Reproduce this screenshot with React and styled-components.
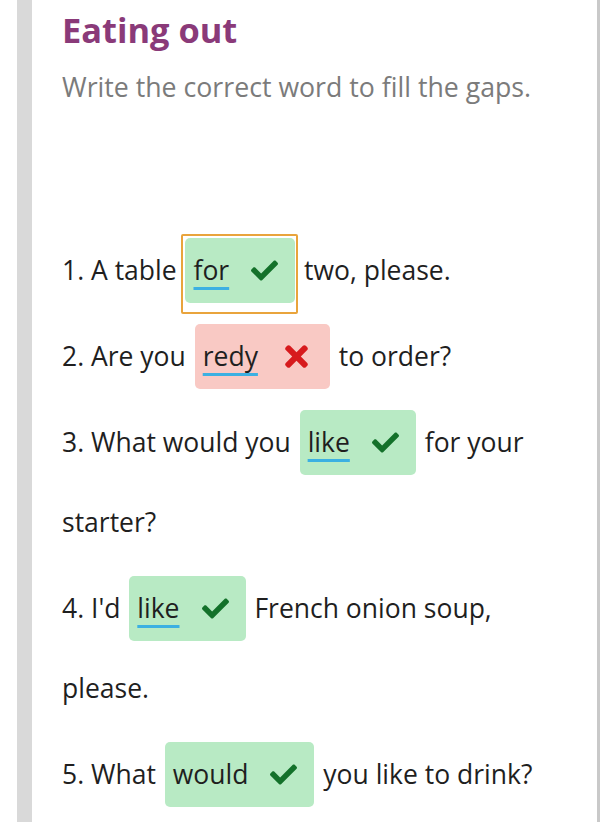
import React from 'react';
import styled, { createGlobalStyle } from 'styled-components';
import { FaCheck, FaTimes } from 'react-icons/fa';

const GlobalStyle = createGlobalStyle`
  html, body {
    margin: 0;
    padding: 0;
    background: #fff;
    overflow: hidden;
  }
  body {
    font-family: "Open Sans", "Noto Sans", sans-serif;
  }
`;

const Page = styled.div`
  display: flex;
  min-height: 100vh;
  padding-left: 17px;
  background: #fff;
`;

const SideBar = styled.div`
  width: 15px;
  flex: none;
  background: #d9d9d9;
`;

const Sheet = styled.main`
  flex: 1;
  padding: 7px 37px 0 30px;
  border-right: 3px solid #c9c9c9;
`;

const Title = styled.h1`
  margin: 0;
  font-size: 34.4px;
  line-height: 46px;
  font-weight: 700;
  color: #8a3a79;
`;

const Instructions = styled.p`
  margin: 15px 0 0;
  font-size: 26.7px;
  line-height: 37px;
  color: #7b7b7b;
`;

const List = styled.div`
  margin-top: 125px;
`;

const Item = styled.p`
  margin: 0 0 6px;
  font-size: 26.5px;
  line-height: 80px;
  color: #1f1f1f;
`;

const Gap = styled.span`
  position: relative;
  display: inline-flex;
  align-items: center;
  height: 65px;
  margin: 0 2px;
  padding: 0 17px 0 8px;
  gap: 22px;
  vertical-align: baseline;
  border-radius: 5px;
  line-height: 1;
  background: ${(p) => (p.correct ? '#b8eac4' : '#f9c9c4')};

  &::after {
    content: '';
    display: ${(p) => (p.focused ? 'block' : 'none')};
    position: absolute;
    top: -4px;
    left: -4px;
    right: -3px;
    bottom: -11px;
    border: 2px solid #e9a43c;
    border-radius: 2px;
  }
`;

const Word = styled.span`
  text-decoration: ${(p) => (p.marked ? 'underline' : 'none')};
  text-decoration-color: #3cb0e2;
  text-decoration-thickness: 3px;
  text-underline-offset: 7px;
`;

const Mark = styled.span`
  display: inline-flex;
  color: ${(p) => (p.correct ? '#13712a' : '#d71a1d')};
  font-size: ${(p) => (p.correct ? '27px' : '33px')};
`;

const Answer = ({ word, correct = true, focused, marked = true }) => (
  <Gap correct={correct} focused={focused}>
    <Word marked={marked}>{word}</Word>
    <Mark correct={correct}>{correct ? <FaCheck /> : <FaTimes />}</Mark>
  </Gap>
);

export default function App() {
  return (
    <>
      <GlobalStyle />
      <Page>
        <SideBar />
        <Sheet>
          <Title>Eating out</Title>
          <Instructions>Write the correct word to fill the gaps.</Instructions>
          <List>
            <Item>
              1. A table <Answer word="for" focused /> two, please.
            </Item>
            <Item>
              2. Are you <Answer word="redy" correct={false} /> to order?
            </Item>
            <Item>
              3. What would you <Answer word="like" /> for your starter?
            </Item>
            <Item>
              4. I'd <Answer word="like" /> French onion soup, please.
            </Item>
            <Item>
              5. What <Answer word="would" marked={false} /> you like to drink?
            </Item>
          </List>
        </Sheet>
      </Page>
    </>
  );
}
